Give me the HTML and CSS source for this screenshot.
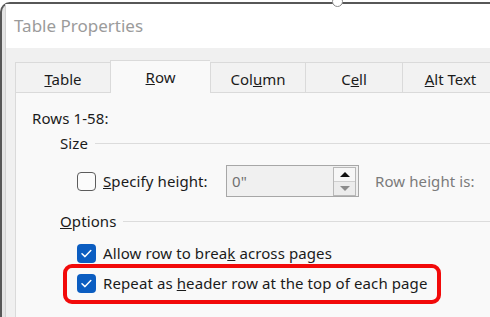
FILE: index.html
```html
<!DOCTYPE html>
<html lang="en">
<head>
  <meta charset="UTF-8">
  <meta name="viewport" content="width=device-width, initial-scale=1.0">
  <title>Table Properties</title>
  <link rel="stylesheet" href="styles.css">
</head>
<body>
  <div class="screen">
    <span class="handle"></span>
    <div class="frame">
      <div class="dialog">
        <div class="title-bar">Table Properties</div>

        <div class="dialog-body">
          <div class="tabs">
            <div class="tab"><span><u>T</u>able</span></div>
            <div class="tab active"><span><u>R</u>ow</span></div>
            <div class="tab"><span>Col<u>u</u>mn</span></div>
            <div class="tab"><span>C<u>e</u>ll</span></div>
            <div class="tab last"><span><u>A</u>lt Text</span></div>
          </div>

          <div class="panel">
            <div class="rows-label">Rows 1-58:</div>

            <div class="group-title"><span>Size</span></div>
            <div class="size-row">
              <label class="check-label specify">
                <span class="checkbox"></span>
                <span><u>S</u>pecify height:</span>
              </label>
              <div class="spin-input">
                <span class="spin-value">0"</span>
                <span class="spin-buttons">
                  <span class="spin-up"></span>
                  <span class="spin-down"></span>
                </span>
              </div>
              <span class="muted">Row height is:</span>
              <div class="next-select"></div>
            </div>

            <div class="group-title"><span><u>O</u>ptions</span></div>
            <div class="options">
              <label class="check-label">
                <span class="checkbox checked">
                  <svg viewBox="0 0 19 19" width="19" height="19"><path d="M5 9.8 L8 12.6 L13.8 6.6" fill="none" stroke="#fff" stroke-width="1.5" stroke-linecap="round" stroke-linejoin="round"/></svg>
                </span>
                <span>Allow row to brea<u>k</u> across pages</span>
              </label>
              <div class="highlight">
                <label class="check-label">
                  <span class="checkbox checked">
                    <svg viewBox="0 0 19 19" width="19" height="19"><path d="M5 9.8 L8 12.6 L13.8 6.6" fill="none" stroke="#fff" stroke-width="1.5" stroke-linecap="round" stroke-linejoin="round"/></svg>
                  </span>
                  <span>Repeat as <u>h</u>eader row at the top of each page</span>
                </label>
              </div>
            </div>
          </div>
        </div>
      </div>
    </div>
  </div>
</body>
</html>
```

FILE: styles.css
```css
body {
  margin: 0;
  font-family: "Noto Sans", "Open Sans", sans-serif;
  background-color: #fff;
  color: #1b1b1b;
}

.screen {
  position: relative;
  width: 490px;
  height: 317px;
  overflow: hidden;
  background-color: #fff;
}

/* resize handle on the selection frame */
.handle {
  position: absolute;
  left: 332px;
  top: -4px;
  width: 9px;
  height: 9px;
  border: 1.5px solid #8a8a8a;
  border-radius: 50%;
  background-color: #fff;
  z-index: 2;
}

.frame {
  margin-top: 2px;
  height: 313px;
  padding-left: 3px;
  border-top: 2px solid #575757;
  border-left: 2px solid #575757;
  border-top-left-radius: 10px;
  background-color: #e4e4e4;
}

.dialog {
  height: 100%;
  width: 600px;
  border-left: 1px solid #d2d2d2;
  background-color: #fff;
  display: flex;
  flex-direction: column;
}

.title-bar {
  height: 44px;
  line-height: 44px;
  padding-left: 8px;
  font-size: 17px;
  color: #9b9b9b;
}

.dialog-body {
  flex: 1;
  background-color: #f0f0f0;
  padding: 12px 0 0 9px;
  display: flex;
  flex-direction: column;
}

.tabs {
  display: flex;
  align-items: flex-end;
  height: 32px;
  position: relative;
  z-index: 1;
}

.tab {
  box-sizing: border-box;
  height: 30px;
  width: 95px;
  border-top: 1px solid #dadada;
  border-left: 1px solid #dadada;
  background-color: #f2f2f2;
  font-size: 15px;
  display: flex;
  align-items: center;
  justify-content: center;
}

.tab span {
  margin-top: 2px;
}

.tab.active {
  height: 33px;
  width: 100px;
  margin-bottom: -1px;
  background-color: #f9f9f9;
}

.tab.active span {
  margin-top: -1px;
}

.tab:nth-child(4),
.tab.last {
  width: 97px;
}

.tab.last {
  border-right: 1px solid #dadada;
}

.panel {
  flex: 1;
  background-color: #f9f9f9;
  border-top: 1px solid #dadada;
  border-left: 1px solid #dadada;
  padding-left: 16px;
  font-size: 15px;
  letter-spacing: 0.1px;
}

.rows-label {
  margin-top: 15px;
  line-height: 20px;
}

.group-title {
  display: flex;
  align-items: center;
  height: 20px;
  margin-top: 5px;
  padding-left: 28px;
}

.group-title::after {
  content: "";
  flex: 1;
  height: 1px;
  margin-left: 7px;
  background-color: #dcdcdc;
}

.group-title + .options {
  margin-top: 12px;
}

.size-row {
  display: flex;
  align-items: center;
  height: 32px;
  margin-top: 12px;
  margin-bottom: 14px;
  padding-left: 45px;
}

.check-label {
  display: flex;
  align-items: center;
  height: 20px;
  white-space: nowrap;
}

.specify {
  width: 149px;
  flex-shrink: 0;
}

.checkbox {
  box-sizing: border-box;
  width: 19px;
  height: 19px;
  margin-right: 7px;
  border: 1px solid #5c5c5c;
  border-radius: 4px;
  background-color: #fbfbfb;
  flex-shrink: 0;
}

.checkbox.checked {
  border: none;
  background-color: #0b5dc1;
}

.checkbox svg {
  display: block;
}

.spin-input {
  box-sizing: border-box;
  width: 133px;
  height: 32px;
  flex-shrink: 0;
  border: 1px solid #a7a7a7;
  background-color: #f0f0f0;
  display: flex;
  align-items: center;
  justify-content: space-between;
}

.spin-value {
  padding-left: 5px;
  color: #707070;
}

.spin-buttons {
  box-sizing: border-box;
  width: 23px;
  height: 29px;
  margin-right: 2px;
  border: 1px solid #b8b8b8;
  display: flex;
  flex-direction: column;
}

.spin-up,
.spin-down {
  flex: 1;
  display: flex;
  align-items: center;
  justify-content: center;
}

.spin-up {
  background-color: #f7f7f7;
  border-bottom: 1px solid #cfcfcf;
}

.spin-down {
  background-color: #ececec;
}

.spin-up::before,
.spin-down::before {
  content: "";
  width: 0;
  height: 0;
  border-left: 5px solid transparent;
  border-right: 5px solid transparent;
}

.spin-up::before {
  border-bottom: 5px solid #111;
}

.spin-down::before {
  border-top: 5px solid #8c8c8c;
}

.muted {
  margin-left: 16px;
  color: #7b7b7b;
  white-space: nowrap;
}

.next-select {
  box-sizing: border-box;
  width: 60px;
  height: 32px;
  margin-left: 15px;
  flex-shrink: 0;
  border: 1px solid #b0b0b0;
}

.options {
  padding-left: 45px;
}

.highlight {
  display: inline-flex;
  margin-top: 1px;
  margin-left: -14px;
  padding: 5px 9px 7px 10px;
  border: 4px solid #f20a0a;
  border-radius: 9px;
}
```
